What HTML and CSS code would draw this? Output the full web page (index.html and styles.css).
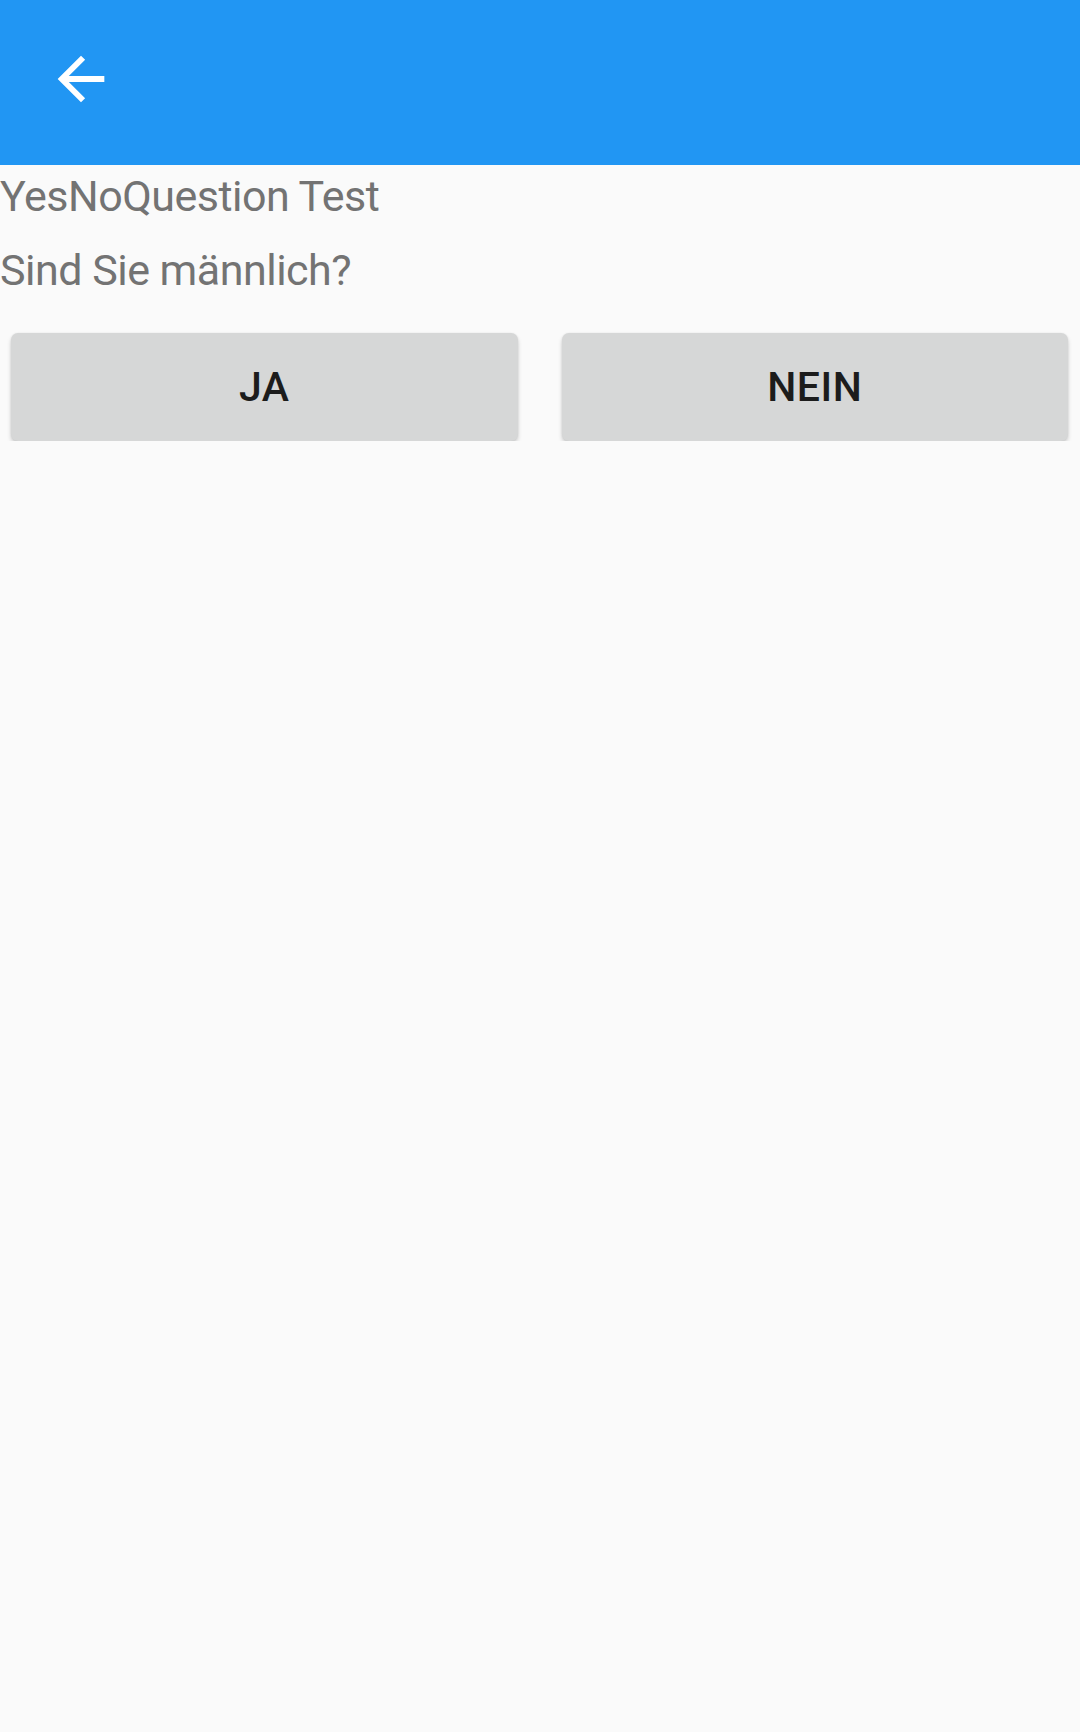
FILE: index.html
```html
<!DOCTYPE html>
<html lang="de">
<head>
<meta charset="utf-8">
<title>YesNoQuestion Test</title>
<link rel="stylesheet" href="styles.css">
</head>
<body>
<header class="toolbar">
  <svg class="back-icon" viewBox="0 0 24 24" aria-label="Zurück">
    <path d="M20 11H7.83l5.59-5.59L12 4l-8 8 8 8 1.41-1.41L7.83 13H20v-2z" fill="#ffffff"/>
  </svg>
</header>
<main class="content">
  <p class="title">YesNoQuestion Test</p>
  <p class="question">Sind Sie männlich?</p>
  <div class="answers">
    <button class="answer">JA</button>
    <button class="answer">NEIN</button>
  </div>
</main>
</body>
</html>
```
FILE: styles.css
```css
html, body {
  margin: 0;
  padding: 0;
  background: #fafafa;
  font-family: Roboto, "Noto Sans", "Liberation Sans", sans-serif;
}

.toolbar {
  height: 165px;
  background: #2196f3;
  box-sizing: border-box;
  padding: 44px 0 0 46px;
  display: flex;
  align-items: flex-start;
}

.back-icon {
  width: 70px;
  height: 70px;
  display: block;
}

.content {
  display: flex;
  flex-direction: column;
}

.title,
.question {
  margin: 0;
  font-size: 43px;
  line-height: 52px;
  letter-spacing: -0.5px;
  color: #737373;
  font-weight: 400;
}

.title {
  margin-top: 5px;
}

.question {
  margin-top: 22px;
}

.answers {
  display: grid;
  grid-template-columns: 1fr 1fr;
  gap: 44px;
  padding: 0 12px 0 11px;
  margin-top: 37px;
}

.answer {
  height: 108px;
  border: none;
  border-radius: 7px;
  background: #d6d7d7;
  color: #1c1c1c;
  font-family: Roboto, "Noto Sans", "Liberation Sans", sans-serif;
  font-size: 41px;
  font-weight: 500;
  letter-spacing: 0.5px;
  box-shadow: 0 3px 4px rgba(0, 0, 0, 0.18), 0 0 2px rgba(0, 0, 0, 0.08);
  padding: 0;
}
```
